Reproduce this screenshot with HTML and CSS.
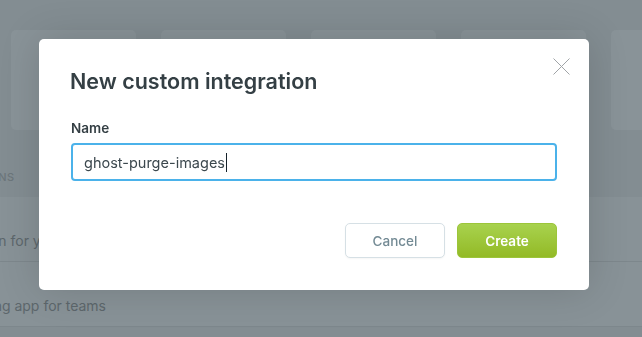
FILE: index.html
```html
<!DOCTYPE html>
<html lang="en">
  <head>
    <meta charset="UTF-8" />
    <meta name="viewport" content="width=device-width, initial-scale=1.0" />
    <title>Integrations</title>
    <link rel="stylesheet" href="styles.css">
  </head>

  <body>
    <div class="page">
      <div class="cards">
        <div class="card"></div>
        <div class="card"></div>
        <div class="card"></div>
        <div class="card"></div>
        <div class="card"></div>
      </div>

      <h3 class="section-title">Custom integrations</h3>

      <div class="list">
        <div class="list-row">
          <span class="row-text row-text-first">Automation for your apps</span>
        </div>
        <div class="list-row">
          <span class="row-text row-text-second">A messaging app for teams</span>
        </div>
      </div>
    </div>

    <div class="overlay">
      <div class="modal">
        <button class="close" type="button" aria-label="Close">
          <svg width="17" height="17" viewBox="0 0 17 17">
            <path d="M0.5 0.5 L16.5 16.5 M16.5 0.5 L0.5 16.5" stroke="#a0a4a7" stroke-width="1" fill="none" />
          </svg>
        </button>

        <h2 class="modal-title">New custom integration</h2>

        <div class="form-group">
          <label for="name">Name</label>
          <div class="input">ghost-purge-images<span class="caret"></span></div>
        </div>

        <div class="actions">
          <button class="btn btn-cancel" type="button">Cancel</button>
          <button class="btn btn-create" type="button">Create</button>
        </div>
      </div>
    </div>
  </body>
</html>
```

FILE: styles.css
```css
* {
  margin: 0;
  padding: 0;
  box-sizing: border-box;
  font-family: Inter, "Open Sans", sans-serif;
}

body {
  background: #838d92;
  width: 642px;
  height: 337px;
  overflow: hidden;
}

.page {
  display: flex;
  flex-direction: column;
}

.cards {
  display: flex;
  gap: 25px;
  padding: 30px 0 0 11px;
  height: 130px;
}

.card {
  flex: 0 0 125px;
  height: 100px;
  background: #899398;
  border-radius: 5px;
}

.section-title {
  height: 67px;
  padding-top: 40px;
  margin-left: -126px;
  font-size: 11px;
  font-weight: 500;
  letter-spacing: 0.4px;
  text-transform: uppercase;
  color: #6c767b;
}

.list {
  background: #889297;
}

.list-row {
  height: 65px;
  border-bottom: 1px solid #7d878c;
  display: flex;
  align-items: center;
  padding-top: 22px;
}

.row-text {
  font-size: 14px;
  color: #5d676c;
  white-space: nowrap;
}

.row-text-first {
  margin-left: -69px;
}

.row-text-second {
  margin-left: -75px;
}

.overlay {
  position: fixed;
  inset: 0;
}

.modal {
  position: absolute;
  left: 39px;
  top: 39px;
  width: 550px;
  height: 251px;
  background: #fff;
  border-radius: 5px;
  box-shadow: 0 0 40px rgba(0, 0, 0, 0.15);
  padding: 30px 32px 32px 31px;
  display: flex;
  flex-direction: column;
}

.close {
  position: absolute;
  top: 19px;
  right: 19px;
  background: none;
  border: none;
  width: 17px;
  height: 17px;
  display: flex;
}

.modal-title {
  font-size: 21.5px;
  line-height: 24px;
  font-weight: 600;
  color: #343f44;
  margin-bottom: 27px;
}

.form-group label {
  display: block;
  font-size: 13.5px;
  line-height: 16px;
  font-weight: 600;
  color: #343f44;
  margin-bottom: 7px;
  padding-left: 1px;
}

.input {
  margin-left: 1px;
  height: 38px;
  border: 2px solid #4bb2ea;
  border-radius: 4px;
  padding: 0 11px;
  display: flex;
  align-items: center;
  font-size: 14.5px;
  color: #3c484e;
}

.caret {
  display: inline-block;
  width: 1px;
  height: 19px;
  background: #15212a;
  margin-left: 1px;
}

.actions {
  display: flex;
  justify-content: flex-end;
  gap: 12px;
  margin-top: 42px;
}

.btn {
  width: 100px;
  height: 35px;
  border-radius: 5px;
  font-size: 13.5px;
  cursor: pointer;
}

.btn-cancel {
  background: #fff;
  border: 1px solid #d6e0e5;
  color: #738a94;
  font-weight: 500;
  box-shadow: 0 1px 2px rgba(0, 0, 0, 0.04);
}

.btn-create {
  background: linear-gradient(to bottom, #a8d24e, #93ba26);
  border: 1px solid #9cc53a;
  color: #fff;
  font-weight: 600;
}
```
